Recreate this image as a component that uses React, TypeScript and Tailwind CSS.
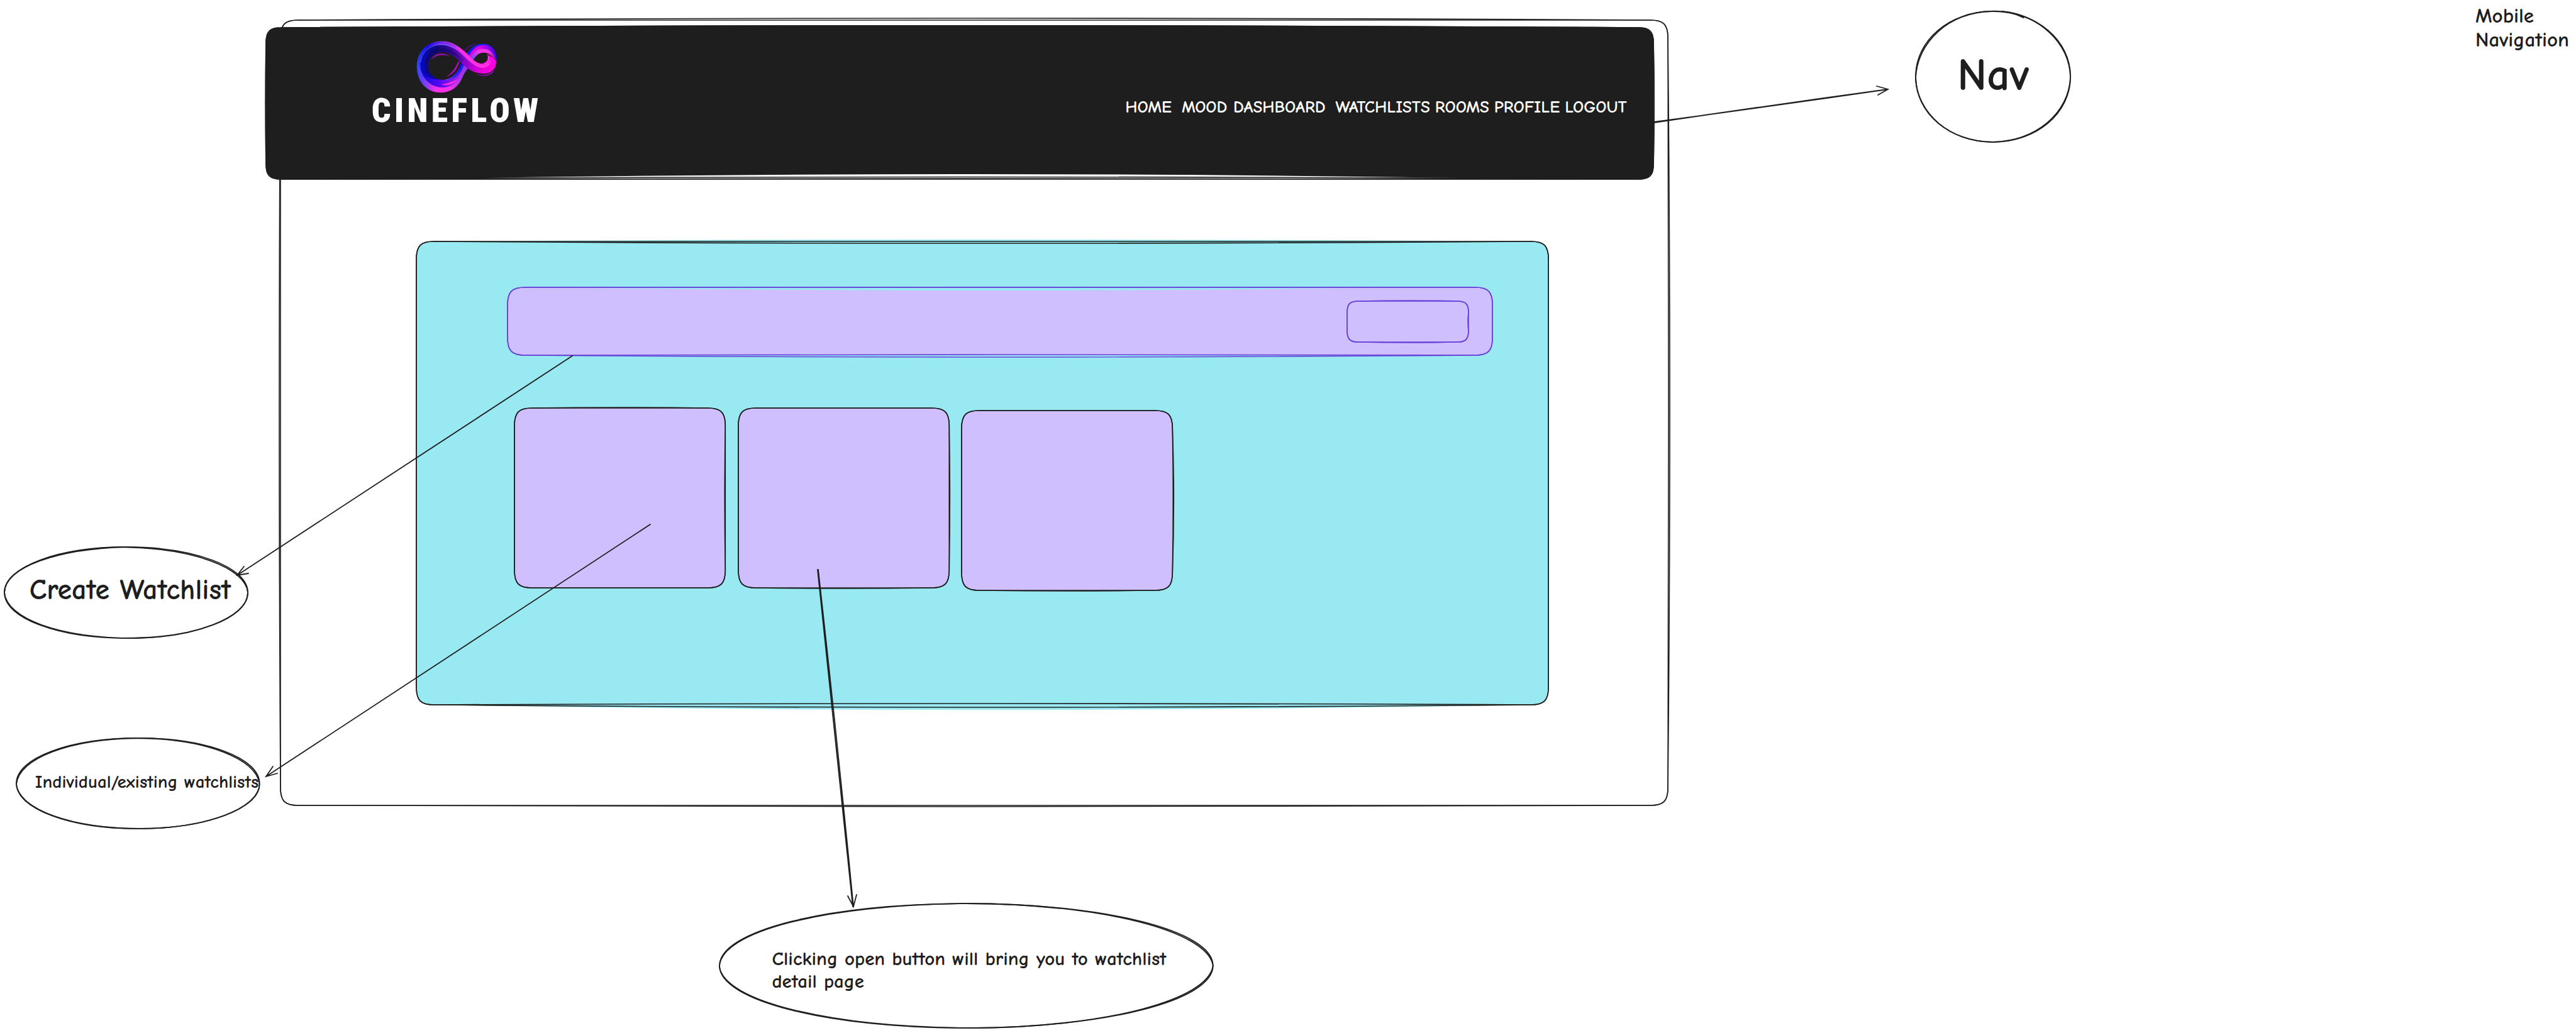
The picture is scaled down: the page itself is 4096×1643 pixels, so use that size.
import type { ReactNode } from "react";

const INK = "#1e1e1e";
const VIOLET = "#6741d9";

/* Hand-drawn outline: two passes over a rounded rectangle, each pass bowed a little. */
type Bow = [top: number, right: number, bottom: number, left: number];

function outline(w: number, h: number, r: number, [t, ri, b, l]: Bow) {
  const k = r * 0.25;
  return [
    `M${r} 0 Q${w / 2} ${t * 2} ${w - r} 0`,
    `C${w - k} 0 ${w} ${k} ${w} ${r}`,
    `Q${w + ri * 2} ${h / 2} ${w} ${h - r}`,
    `C${w} ${h - k} ${w - k} ${h} ${w - r} ${h}`,
    `Q${w / 2} ${h + b * 2} ${r} ${h}`,
    `C${k} ${h} 0 ${h - k} 0 ${h - r}`,
    `Q${l * 2} ${h / 2} 0 ${r}`,
    `C0 ${k} ${k} 0 ${r} 0`,
  ].join(" ");
}

function Sketch({
  w,
  h,
  r,
  bows,
  color = INK,
  children,
}: {
  w: number;
  h: number;
  r: number;
  bows: [Bow, Bow];
  color?: string;
  children?: ReactNode;
}) {
  return (
    <svg
      aria-hidden="true"
      viewBox={`0 0 ${w} ${h}`}
      preserveAspectRatio="none"
      className="pointer-events-none absolute inset-0 size-full overflow-visible"
      fill="none"
      stroke={color}
      strokeWidth="1.6"
    >
      {children}
      <path d={outline(w, h, r, bows[0])} vectorEffect="non-scaling-stroke" />
      <path d={outline(w, h, r, bows[1])} vectorEffect="non-scaling-stroke" />
    </svg>
  );
}

function Logo() {
  return (
    <svg viewBox="130 78 508 328" className="h-[83px] w-[129px]" aria-hidden="true">
      <defs>
        <linearGradient id="ring" gradientUnits="userSpaceOnUse" x1="132" y1="240" x2="445" y2="240">
          <stop offset="0" stopColor="#2f45f5" />
          <stop offset="0.2" stopColor="#8a3df0" />
          <stop offset="0.4" stopColor="#ff2fe6" />
          <stop offset="0.65" stopColor="#f034e6" />
          <stop offset="1" stopColor="#8a35e8" />
        </linearGradient>
        <linearGradient id="ringTop" gradientUnits="userSpaceOnUse" x1="140" y1="240" x2="480" y2="150">
          <stop offset="0" stopColor="#2f45f5" />
          <stop offset="0.28" stopColor="#1208f0" />
          <stop offset="0.5" stopColor="#7a30f0" />
          <stop offset="0.75" stopColor="#c136ea" />
          <stop offset="1" stopColor="#ff2fe0" />
        </linearGradient>
        <linearGradient id="inner" gradientUnits="userSpaceOnUse" x1="160" y1="240" x2="470" y2="240">
          <stop offset="0" stopColor="#0508c0" />
          <stop offset="0.3" stopColor="#0c0a80" />
          <stop offset="0.6" stopColor="#3a08a0" />
          <stop offset="1" stopColor="#8c04c8" />
        </linearGradient>
        <linearGradient id="belly" gradientUnits="userSpaceOnUse" x1="155" y1="260" x2="430" y2="300">
          <stop offset="0" stopColor="#0606e0" />
          <stop offset="0.5" stopColor="#5a08f0" />
          <stop offset="1" stopColor="#b030e8" />
        </linearGradient>
        <linearGradient id="small" gradientUnits="userSpaceOnUse" x1="440" y1="150" x2="634" y2="170">
          <stop offset="0" stopColor="#f800e0" />
          <stop offset="0.45" stopColor="#d800e4" />
          <stop offset="0.75" stopColor="#7a04ea" />
          <stop offset="1" stopColor="#2a08f4" />
        </linearGradient>
        <linearGradient id="smallIn" gradientUnits="userSpaceOnUse" x1="470" y1="200" x2="620" y2="150">
          <stop offset="0" stopColor="#5a48f4" />
          <stop offset="0.4" stopColor="#e838e8" />
          <stop offset="0.8" stopColor="#ff30e0" />
          <stop offset="1" stopColor="#8a10a0" />
        </linearGradient>
        <linearGradient id="strand" gradientUnits="userSpaceOnUse" x1="340" y1="100" x2="600" y2="280">
          <stop offset="0" stopColor="#4a08b0" />
          <stop offset="0.45" stopColor="#8804cc" />
          <stop offset="0.75" stopColor="#d800d8" />
          <stop offset="1" stopColor="#ff00e0" />
        </linearGradient>
      </defs>

      {/* rising strand and lower bowl */}
      <path d="M132 240C132 335 195 403 280 403C345 403 393 370 418 310C430 280 445 262 462 240L440 205L412 218C398 270 350 323 300 323C245 323 203 290 202 240Z" fill="url(#ring)" />
      <path d="M153 215C150 300 210 372 300 371C350 368 385 340 410 290C425 262 430 240 432 222L412 218C398 270 350 323 300 323C245 323 203 290 202 240Z" fill="url(#belly)" />
      <path d="M153 240C165 295 215 325 300 323C245 323 203 290 202 225Z" fill="#0508a8" />
      <path d="M285 353C325 345 360 335 392 316C372 348 335 362 288 354Z" fill="#ff2ae2" />
      <path d="M300 323C360 318 398 272 410 218L430 222C420 275 370 326 300 323Z" fill="#0510f4" />
      <path d="M312 323C370 314 408 272 422 232" fill="none" stroke="#8a68ff" strokeWidth="3" />

      {/* small loop */}
      <path d="M436 176C462 130 500 97 548 97C602 97 634 140 634 200C620 190 600 150 552 152C520 152 498 172 484 204Z" fill="url(#small)" />
      <path d="M436 178C460 128 500 97 548 97C575 97 600 108 615 130C590 108 560 102 540 106C500 110 474 140 452 188Z" fill="#0c22f4" />
      <path d="M462 200C478 155 510 128 548 128C590 128 618 150 630 205C615 180 590 152 552 152C520 152 500 170 484 206Z" fill="url(#smallIn)" />
      <path d="M574 160C600 172 622 186 629 210C632 250 602 283 552 283L520 220C560 226 590 200 574 160Z" fill="#ff00e0" />
      <path d="M578 166C590 190 584 218 552 225" fill="none" stroke="#ff70f0" strokeWidth="4" />
      <path d="M572 160C600 166 622 180 630 208C616 184 600 176 580 172Z" fill="#90088c" />

      {/* large loop */}
      <path d="M132 245C130 150 195 80 290 80C365 80 415 128 455 165C490 205 515 224 552 224L540 262C470 255 430 200 380 165C350 148 320 140 285 148C235 152 202 190 202 240L154 245Z" fill="url(#ringTop)" />
      <path d="M153 225C152 150 205 104 285 103C350 103 400 145 440 190C478 235 510 264 550 262L552 283C490 283 445 250 410 214C370 172 330 148 285 148C235 152 202 190 202 240C204 275 215 292 235 308C190 300 158 265 153 225Z" fill="url(#inner)" />
      <path d="M182 235C182 165 225 122 285 122C350 122 395 168 430 208C395 178 345 145 285 148C235 152 202 190 202 240C204 265 210 280 220 295C196 280 184 262 182 235Z" fill="#12065c" fillOpacity="0.55" />
      <path d="M395 148C440 178 480 244 550 250C585 248 612 230 629 200C636 250 600 283 552 283C490 283 445 250 410 214C440 215 425 180 395 148Z" fill="url(#strand)" />
      <path d="M375 118C430 150 470 240 548 247C580 246 600 226 598 190C590 215 575 224 550 224C500 220 478 190 448 160C422 135 398 122 375 118Z" fill="#ff2fe0" />
      <path d="M155 215C162 150 210 103 285 101C320 101 345 112 365 124" fill="none" stroke="#7a70ff" strokeWidth="3.5" />
      <path d="M200 110C225 92 260 86 300 90C330 94 352 102 372 116" fill="none" stroke="#4a10f0" strokeWidth="3" />

      {/* loose accents */}
      <path d="M220 200C240 155 295 145 342 175C295 160 250 165 220 200Z" fill="#a00cc8" />
      <path d="M400 204C390 250 362 290 315 305C355 280 375 245 392 208Z" fill="#b80cc0" />
      <path d="M430 140C450 115 480 98 512 96C480 104 455 120 434 142Z" fill="#5a10a8" />
      <path d="M500 284C540 300 590 296 620 258C612 296 548 312 500 284Z" fill="#9a08c4" />
    </svg>
  );
}

const links: { label: string; href: string; gap: string }[] = [
  { label: "HOME", href: "#home", gap: "mr-4" },
  { label: "MOOD DASHBOARD", href: "#mood-dashboard", gap: "mr-4" },
  { label: "WATCHLISTS", href: "#watchlists", gap: "mr-2" },
  { label: "ROOMS", href: "#rooms", gap: "mr-2" },
  { label: "PROFILE", href: "#profile", gap: "mr-2" },
  { label: "LOGOUT", href: "#logout", gap: "" },
];

function NavBar() {
  return (
    <header className="relative -ml-[23px] flex h-[241px] w-full items-start justify-between rounded-[20px] bg-[#1e1e1e] pr-[42px] pl-[168px]">
      <Sketch w={2206} h={241} r={24} bows={[[-3, 1, 0, -1], [-3, 1, -1, 0]]}>
        <path d="M40 0Q1103 -8 2166 0Z" fill={INK} stroke="none" />
        <path d="M300 240Q1103 226 1960 240Z" fill="#ffffff" stroke="none" />
        <path d="M200 240Q1103 235 2040 240" vectorEffect="non-scaling-stroke" />
      </Sketch>
      <a href="#home" className="relative mt-[21px] flex flex-col items-center text-white">
        <Logo />
        <span className="font-['Roboto_Condensed','Roboto',sans-serif] text-[54px] leading-[56px] font-black tracking-widest">
          CINEFLOW
        </span>
      </a>
      <nav
        aria-label="Main"
        className="relative mt-[111px] flex text-[27px] leading-8 font-bold whitespace-nowrap text-white"
      >
        {links.map(({ label, href, gap }) => (
          <a key={label} href={href} className={gap}>
            {label}
          </a>
        ))}
      </nav>
    </header>
  );
}

function Card({ bows }: { bows: [Bow, Bow] }) {
  return (
    <article className="relative h-[286px] w-full rounded-[22px] bg-[#d0bfff]">
      <Sketch w={335} h={286} r={28} bows={bows} />
    </article>
  );
}

function Board() {
  return (
    <section
      aria-label="Watchlists"
      className="relative mt-[99px] ml-[9.8%] w-[81.6%] rounded-[22px] bg-[#99e9f2] pt-[73px] pb-[182px]"
    >
      <Sketch w={1800} h={733} r={28} bows={[[0, 0, -2, 0], [3, 0, 4, 0]]}>
        <path d="M30 0Q900 -6 1770 0Z" fill="#99e9f2" stroke="none" />
        <path d="M30 733Q900 749 1770 733Z" fill="#99e9f2" stroke="none" />
      </Sketch>

      <div className="relative ml-[8.05%] flex h-[108px] w-[87%] items-center justify-end rounded-[22px] bg-[#d0bfff] pr-[38px]">
        <Sketch w={1566} h={108} r={28} color={VIOLET} bows={[[0, 0, -1, 0], [0, 0, 3, 0]]}>
          <path d="M60 0Q783 10 1400 0Z" fill="#99e9f2" stroke="none" />
        </Sketch>
        <button type="button" aria-label="Create" className="relative h-[65px] w-[193px] rounded-[16px]">
          <Sketch w={193} h={65} r={18} color={VIOLET} bows={[[-1, -1, 0, 0], [0, 0, 1, 0]]} />
        </button>
      </div>

      <div className="mt-[84px] ml-[8.7%] grid w-[58.1%] grid-cols-3 gap-5">
        <Card bows={[[-1, 0, 0, 0], [0, -1, 0, 0]]} />
        <Card bows={[[0, 0, 1, 0], [0, 1, 0, 0]]} />
        <div className="pt-1">
          <Card bows={[[0, 1, 0, 0], [0, 2, 1, 0]]} />
        </div>
      </div>
    </section>
  );
}

function Bubble({ className, d, children }: { className: string; d: string; children: ReactNode }) {
  return (
    <div className={`absolute flex font-bold ${className}`}>
      <svg
        aria-hidden="true"
        viewBox="0 0 100 100"
        preserveAspectRatio="none"
        className="absolute inset-0 size-full overflow-visible"
        fill="none"
        stroke={INK}
        strokeWidth="1.8"
      >
        <path d="M50 0C78 0 100 22 100 50C100 78 78 100 50 100C22 100 0 78 0 50C0 22 22 0 50 0" vectorEffect="non-scaling-stroke" />
        <path d={d} vectorEffect="non-scaling-stroke" />
      </svg>
      <p className="relative">{children}</p>
    </div>
  );
}

function Arrows() {
  return (
    <svg
      aria-hidden="true"
      viewBox="0 0 4096 1643"
      className="pointer-events-none absolute inset-x-0 top-0 w-full"
      fill="none"
      stroke={INK}
      strokeWidth="1.8"
      strokeLinecap="round"
    >
      <path d="M910 566Q640 742 377 915M910 566Q643 741 377 915M388 901L377 915L395 912" />
      <path d="M1034 834Q730 1034 423 1235M1034 834Q726 1037 423 1235M434 1219L423 1235L441 1230" />
      <path d="M1300 906Q1328 1174 1356 1442M1301 906Q1331 1174 1357 1442M1348 1425L1357 1442L1362 1423" />
      <path d="M2630 194Q2816 169 3002 142M2630 195Q2818 167 3002 142M2984 137L3002 142L2986 151" />
    </svg>
  );
}

export default function App() {
  return (
    <main className="relative min-h-screen w-full overflow-hidden bg-white pt-8 font-['Comic_Neue','Lato',sans-serif] text-[#1e1e1e]">
      <div className="relative ml-[10.88%] w-[53.86%] pt-3 pb-[160px]">
        <Sketch w={2206} h={1247} r={28} bows={[[0, 1, 0, 0], [-3, 3, 2, -2]]} />
        <NavBar />
        <Board />
      </div>

      <Arrows />

      <Bubble
        className="top-[870px] left-[0.18%] h-[145px] w-[9.45%] items-center justify-center pb-2 pl-3 text-[46px] leading-[58px] whitespace-nowrap"
        d="M47 0C78 1 99 23 100 50C100 78 78 99 54 100C22 100 1 78 0 50C0 22 22 2 50 0"
      >
        Create Watchlist
      </Bubble>
      <Bubble
        className="top-[1174px] left-[0.64%] h-[144px] w-[9.44%] items-center justify-center pb-1 pl-7 text-[29px] leading-9 whitespace-nowrap"
        d="M50 0C78 1 99 23 100 51C100 78 78 99 52 100C22 100 1 78 0 51C1 22 22 1 50 0Q58 0 63 2"
      >
        Individual/existing watchlists
      </Bubble>
      <Bubble
        className="top-[1437px] left-[27.94%] h-[198px] w-[19.16%] pt-[70px] pr-8 pl-[83px] text-[31px] leading-9"
        d="M50 0C77 0 99 22 100 50C99 78 78 99 52 100C22 100 1 78 0 51C0 23 21 1 50 0Q60 0 69 4"
      >
        Clicking open button will bring you to watchlist detail page
      </Bubble>
      <Bubble
        className="top-[18px] left-[74.37%] h-[208px] w-[6.01%] items-center justify-center pb-1 text-[72px] leading-[84px]"
        d="M56 0C80 3 99 24 100 50C99 78 78 99 50 100C22 100 1 78 0 51C1 23 22 1 48 0Q60 -1 70 5"
      >
        Nav
      </Bubble>
      <h2 className="absolute top-[6px] right-1 w-[156px] text-[33px] leading-[38px] font-bold">
        Mobile Navigation
      </h2>
    </main>
  );
}
